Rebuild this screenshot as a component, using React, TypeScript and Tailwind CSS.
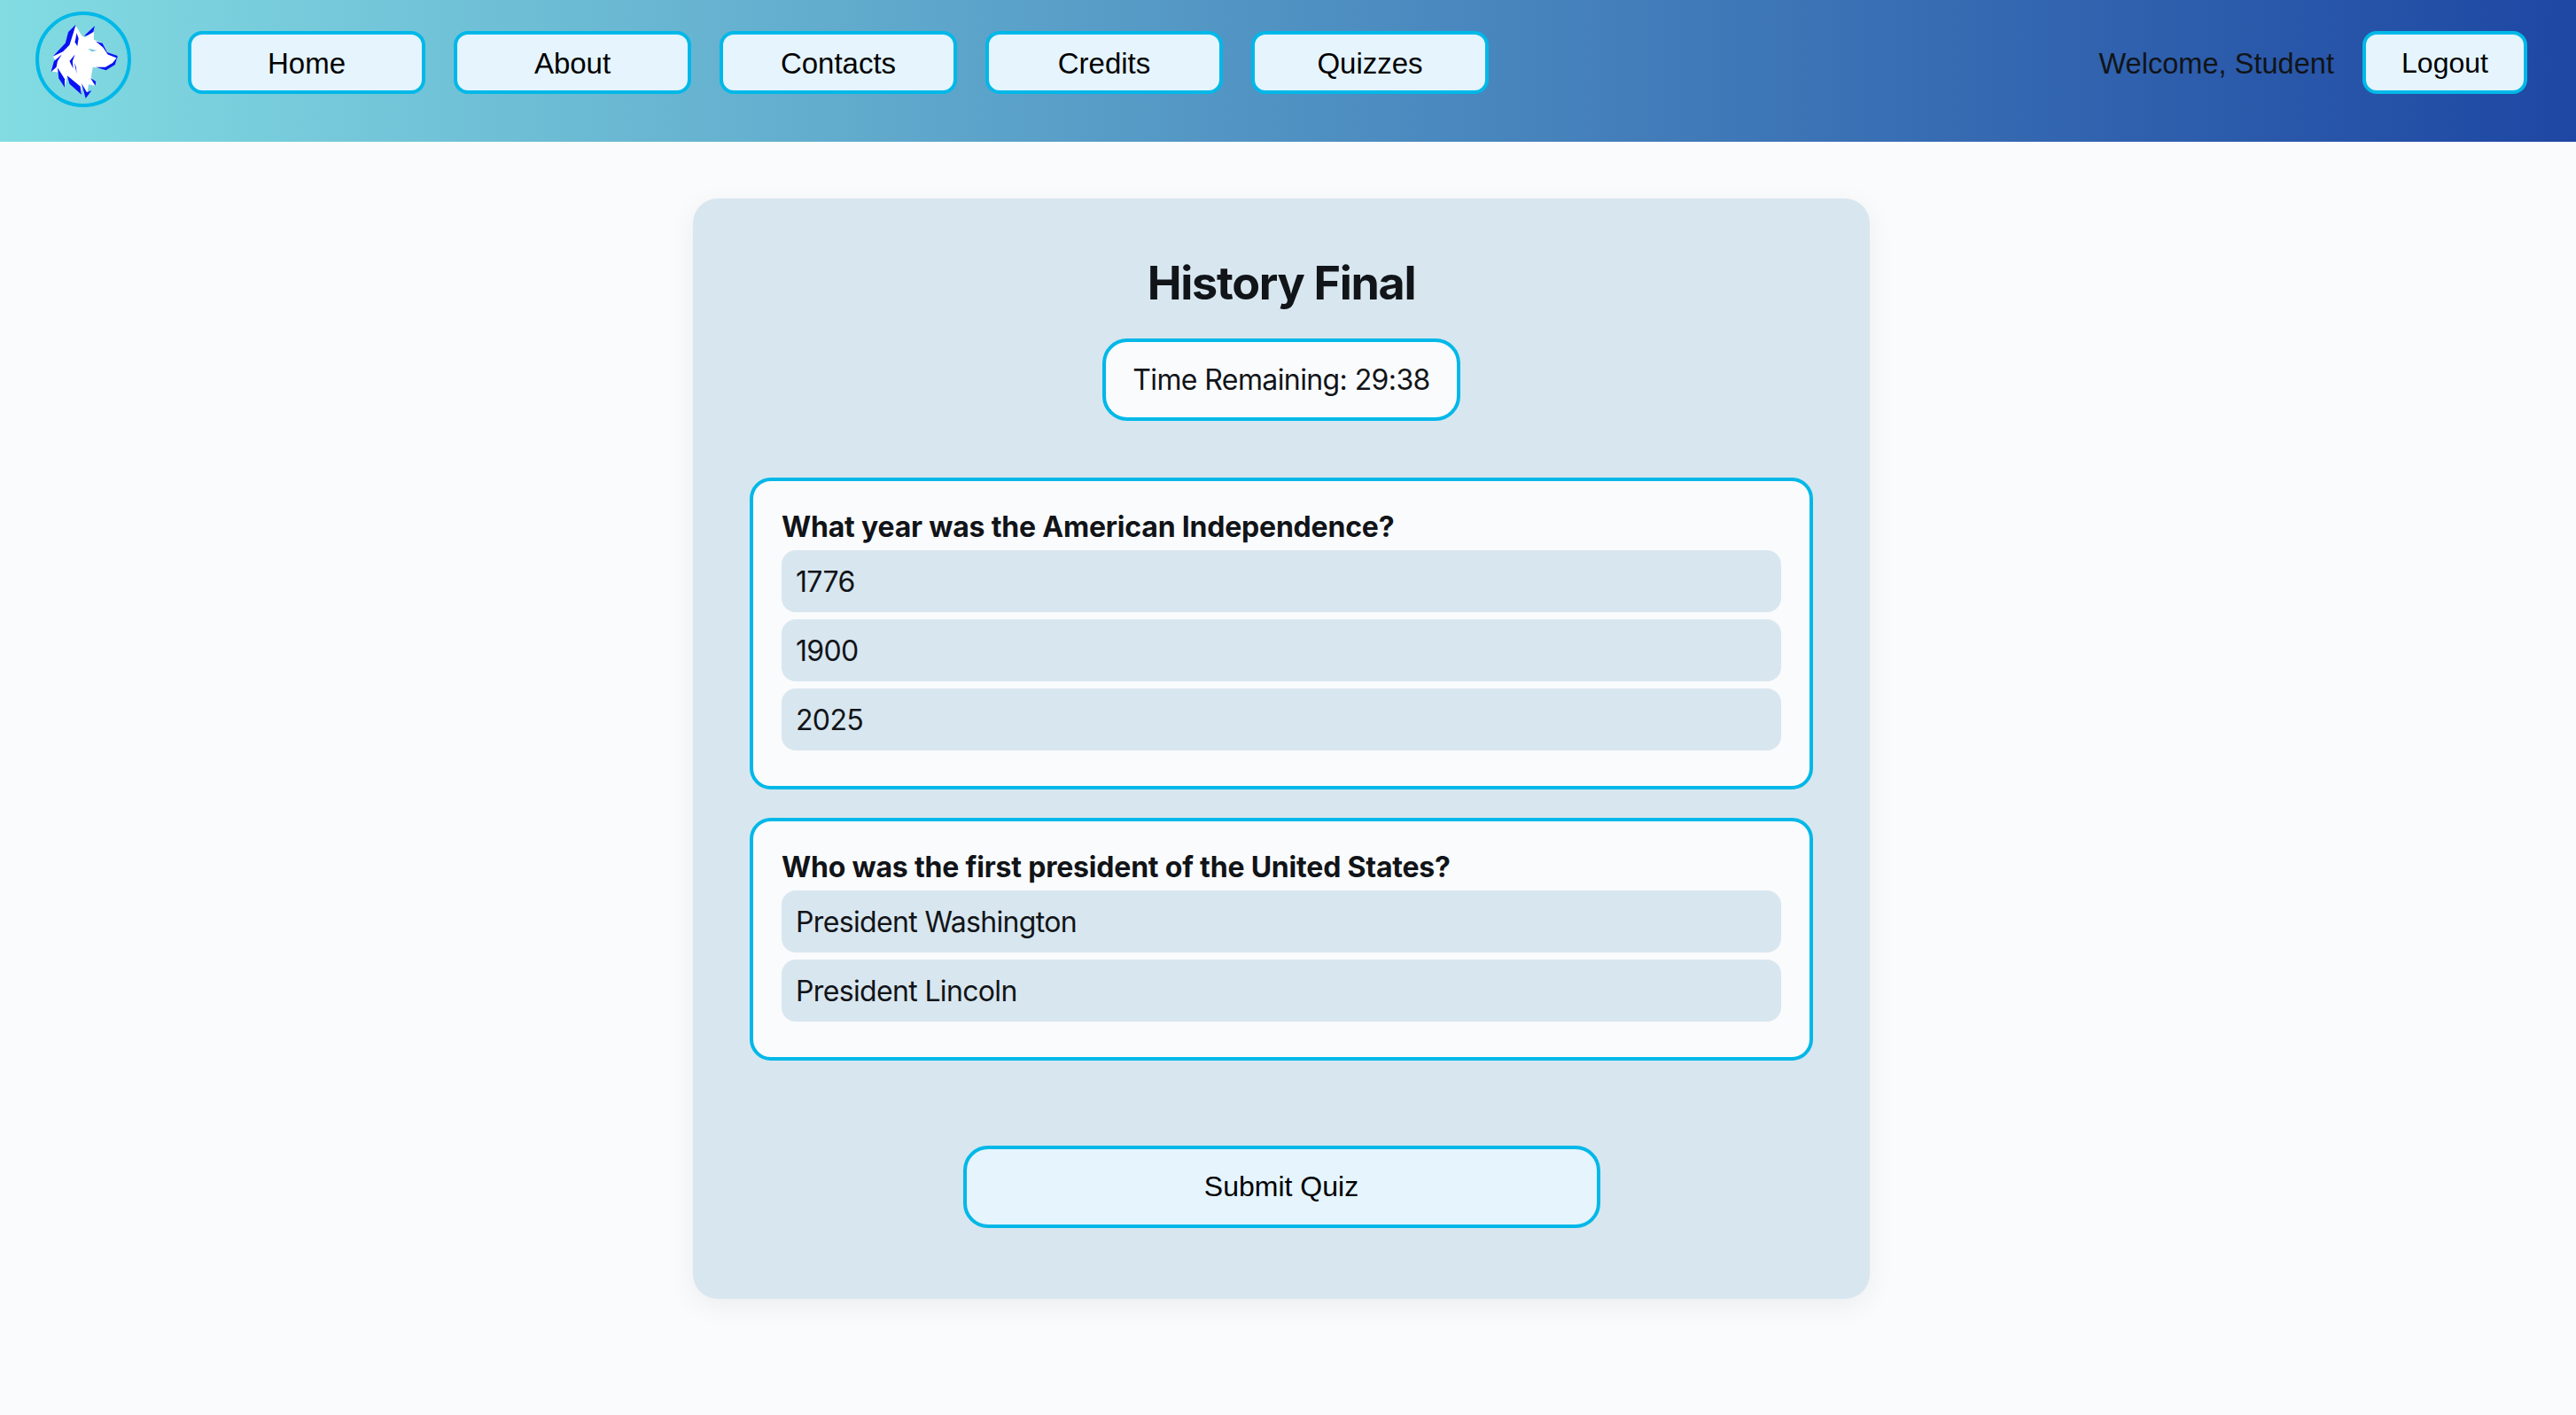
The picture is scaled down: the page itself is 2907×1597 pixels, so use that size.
const navItems = ['Home', 'About', 'Contacts', 'Credits', 'Quizzes']

const questions = [
  { text: 'What year was the American Independence?', options: ['1776', '1900', '2025'] },
  { text: 'Who was the first president of the United States?', options: ['President Washington', 'President Lincoln'] },
]

function WolfLogo() {
  return (
    <svg viewBox="60 40 320 320" className="h-[108px] w-[108px] shrink-0">
      <circle cx="220" cy="200" r="154" fill="none" stroke="#00b8e8" strokeWidth="12" />
      <path
        d="M195 88 L216 122 L228 126 L256 94 L255 134 L284 146 L300 176 L334 190 L326 215 L296 232 L252 226 L246 258 L260 288 L238 284 L230 326 L214 286 L214 316 L166 258 L158 292 L136 244 L114 240 L126 202 L118 190 L164 146 L174 110 Z"
        fill="#fff"
      />
      <path d="M195 84 L170 108 L160 146 L118 190 L152 174 L174 152 L186 114 Z" fill="#0a12f2" />
      <path d="M222 122 L258 88 L254 108 L234 120 Z" fill="#0a12f2" />
      <path d="M284 146 L300 176 L334 188 L334 196 L302 184 L286 160 L262 140 Z" fill="#0a12f2" />
      <path d="M334 192 L326 218 L296 236 L262 226 L294 226 L318 212 Z" fill="#0a12f2" />
      <path d="M148 184 L122 206 L112 242 L130 226 L134 206 Z" fill="#0a12f2" />
      <path d="M134 228 L138 264 L158 294 L158 266 Z" fill="#0a12f2" />
      <path d="M166 254 L174 282 L214 318 L210 290 Z" fill="#0a12f2" />
      <path d="M214 280 L228 330 L248 304 L232 310 Z" fill="#0a12f2" />
      <path d="M244 262 L262 274 L260 288 Z" fill="#0a12f2" />
      <path d="M192 184 L174 206 L186 230 L184 206 Z" fill="#0a12f2" />
      <path d="M196 226 L190 212 L198 248 Z" fill="#0a12f2" />
      <path d="M198 112 L192 142 L200 156 L204 130 Z" fill="#0a12f2" />
      <path d="M236 164 L266 170 L248 174 Z" fill="#6fc4dc" />
    </svg>
  )
}

export default function App() {
  return (
    <div className="min-h-[1597px] bg-[#fafbfd] font-['Inter',sans-serif] text-[#111418]">
      <header className="flex h-[160px] items-start bg-[linear-gradient(90deg,#82dce2_0%,#1e47a3_100%)] pl-[40px] pr-[55px] pt-[13px]">
        <WolfLogo />
        <nav className="ml-[64px] mt-[22px] flex gap-[32px]">
          {navItems.map((item) => (
            <button
              key={item}
              className="h-[71px] w-[268px] rounded-[16px] border-4 border-[#00b8e8] bg-[#e5f4fd] pt-[3px] font-['Liberation_Sans',sans-serif] text-[33px] text-black"
            >
              {item}
            </button>
          ))}
        </nav>
        <div className="ml-auto mt-[22px] flex items-center gap-[32px]">
          <span className="pt-[3px] font-['Liberation_Sans',sans-serif] text-[32.6px] text-[#111418]">Welcome, Student</span>
          <button className="h-[71px] w-[186px] rounded-[16px] border-4 border-[#00b8e8] bg-[#e5f4fd] font-['Liberation_Sans',sans-serif] text-[32px] text-black">
            Logout
          </button>
        </div>
      </header>

      <main className="flex justify-center pr-[15px] pt-[64px]">
        <section className="flex h-[1242px] w-[1328px] flex-col items-center rounded-[28px] bg-[#d8e6ef] px-[64px] pt-[66px] shadow-[0_8px_32px_rgba(0,0,0,0.06)]">
          <h1 className="text-[52px] font-bold leading-[60px] tracking-[-1.3px]">History Final</h1>
          <div className="mt-[32px] flex h-[93px] w-[404px] items-center justify-center rounded-[28px] border-4 border-[#00b8e8] bg-[#fafbfd] text-[32px] tracking-[-0.6px]">
            Time Remaining: 29:38
          </div>
          <div className="mt-[64px] flex w-full flex-col gap-[32px]">
            {questions.map((q) => (
              <div key={q.text} className="rounded-[24px] border-4 border-[#00b8e8] bg-[#fafbfd] px-[32px] pb-[40px] pt-[28px]">
                <p className="mb-[2px] text-[32px] font-bold leading-[48px] tracking-[-0.2px]">{q.text}</p>
                <div className="flex flex-col gap-[8px]">
                  {q.options.map((o) => (
                    <div key={o} className="flex h-[70px] items-center rounded-[16px] bg-[#d8e6ef] px-[16px] pt-[2px] text-[32px] tracking-[-0.65px]">
                      {o}
                    </div>
                  ))}
                </div>
              </div>
            ))}
          </div>
          <button className="mt-[96px] h-[93px] w-[719px] rounded-[28px] border-4 border-[#00b8e8] bg-[#e5f4fd] pb-[2px] font-['Liberation_Sans',sans-serif] text-[32px] text-black">
            Submit Quiz
          </button>
        </section>
      </main>
    </div>
  )
}
